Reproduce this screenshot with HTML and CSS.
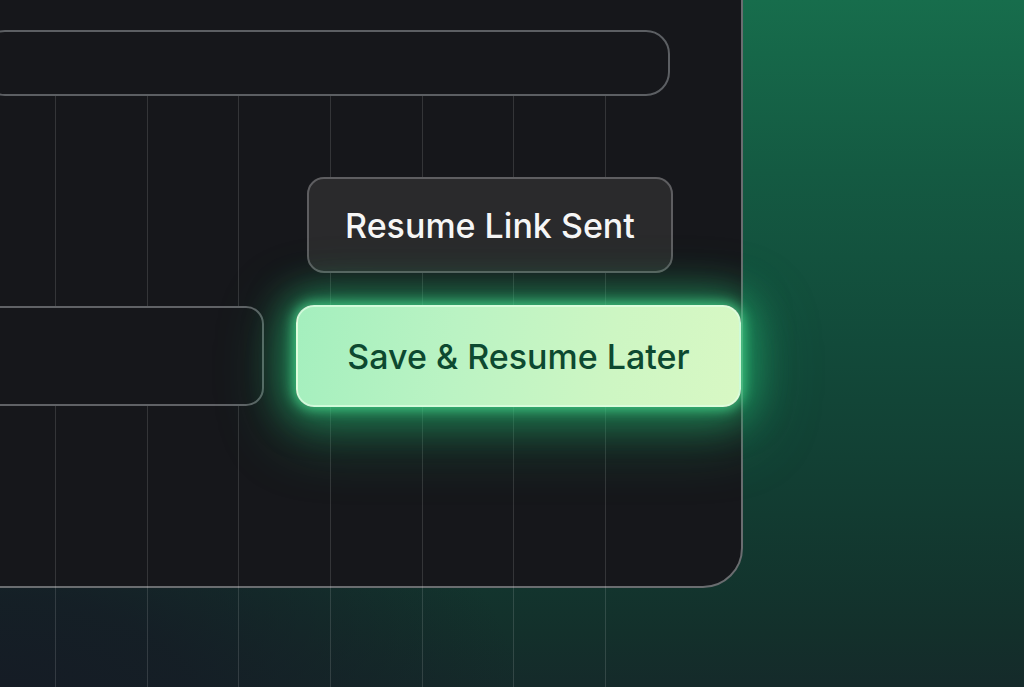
FILE: index.html
```html
<!DOCTYPE html>
<html lang="en">
<head>
<meta charset="utf-8">
<title>Save &amp; Resume Later</title>
<link rel="stylesheet" href="styles.css">
</head>
<body>
<div class="stage">
  <div class="panel">
    <div class="search-bar"></div>
    <div class="toast-row">
      <div class="toast">Resume Link Sent</div>
    </div>
    <div class="action-row">
      <div class="field"></div>
      <button class="save-btn" type="button">Save &amp; Resume Later</button>
    </div>
  </div>
  <div class="grid-lines" aria-hidden="true">
    <span></span><span></span><span></span><span></span><span></span><span></span><span></span>
  </div>
</div>
</body>
</html>
```

FILE: styles.css
```css
html, body {
  margin: 0;
  padding: 0;
}

body {
  width: 1024px;
  height: 687px;
  overflow: hidden;
  font-family: Inter, "Noto Sans", "Liberation Sans", sans-serif;
}

.stage {
  position: relative;
  width: 1024px;
  height: 687px;
  overflow: hidden;
  background:
    radial-gradient(ellipse 520px 260px at 0% 100%, #151c25 0%, rgba(21, 28, 37, 0.85) 35%, rgba(21, 28, 37, 0) 100%),
    linear-gradient(to bottom, #176d4c 0%, #145a42 25%, #124a3a 50%, #123b31 75%, #13302b 92%, #152a2a 100%);
}

.panel {
  box-sizing: border-box;
  width: 784px;
  height: 629px;
  margin: -41px 0 0 -41px;
  border: 2px solid #6a6d70;
  border-radius: 0 0 40px 0;
  background: #16171b;
  display: flex;
  flex-direction: column;
}

.search-bar {
  box-sizing: border-box;
  width: 689px;
  height: 66px;
  margin: 69px 0 0 20px;
  border: 2px solid #5c5f63;
  border-radius: 24px;
  background: #16171b;
  position: relative;
  z-index: 2;
}

.toast-row {
  display: flex;
  margin-top: 81px;
  padding-left: 346px;
}

.toast {
  box-sizing: border-box;
  width: 366px;
  height: 96px;
  border: 2px solid #5e5e61;
  border-radius: 17px;
  background: #2a2a2c;
  color: #f6f6f6;
  font-size: 34px;
  font-weight: 500;
  display: flex;
  align-items: center;
  justify-content: center;
  position: relative;
  z-index: 2;
}

.action-row {
  display: flex;
  align-items: center;
  gap: 32px;
  margin-top: 32px;
  padding-left: 19px;
}

.field {
  box-sizing: border-box;
  width: 284px;
  height: 100px;
  border: 2px solid #606266;
  border-radius: 18px;
  background: #16171b;
  position: relative;
  z-index: 2;
}

.save-btn {
  box-sizing: border-box;
  width: 445px;
  height: 102px;
  border: 2px solid rgba(225, 255, 230, 0.7);
  border-radius: 18px;
  background: linear-gradient(100deg, #a4efbe 0%, #baf3c3 35%, #cdf6c3 70%, #d8f8c4 100%);
  color: #0d4930;
  font-family: Inter, "Noto Sans", "Liberation Sans", sans-serif;
  font-size: 34px;
  font-weight: 500;
  padding: 0;
  box-shadow:
    0 0 12px 3px rgba(80, 230, 150, 0.65),
    0 0 36px 12px rgba(40, 195, 120, 0.5),
    0 14px 60px 18px rgba(32, 160, 100, 0.4);
  position: relative;
  z-index: 2;
}

.grid-lines {
  position: absolute;
  left: 55px;
  top: 95px;
  bottom: 0;
  display: flex;
  z-index: 1;
  pointer-events: none;
}

.grid-lines span {
  box-sizing: border-box;
  width: 91.67px;
  border-left: 1.5px solid rgba(255, 255, 255, 0.13);
}
```
